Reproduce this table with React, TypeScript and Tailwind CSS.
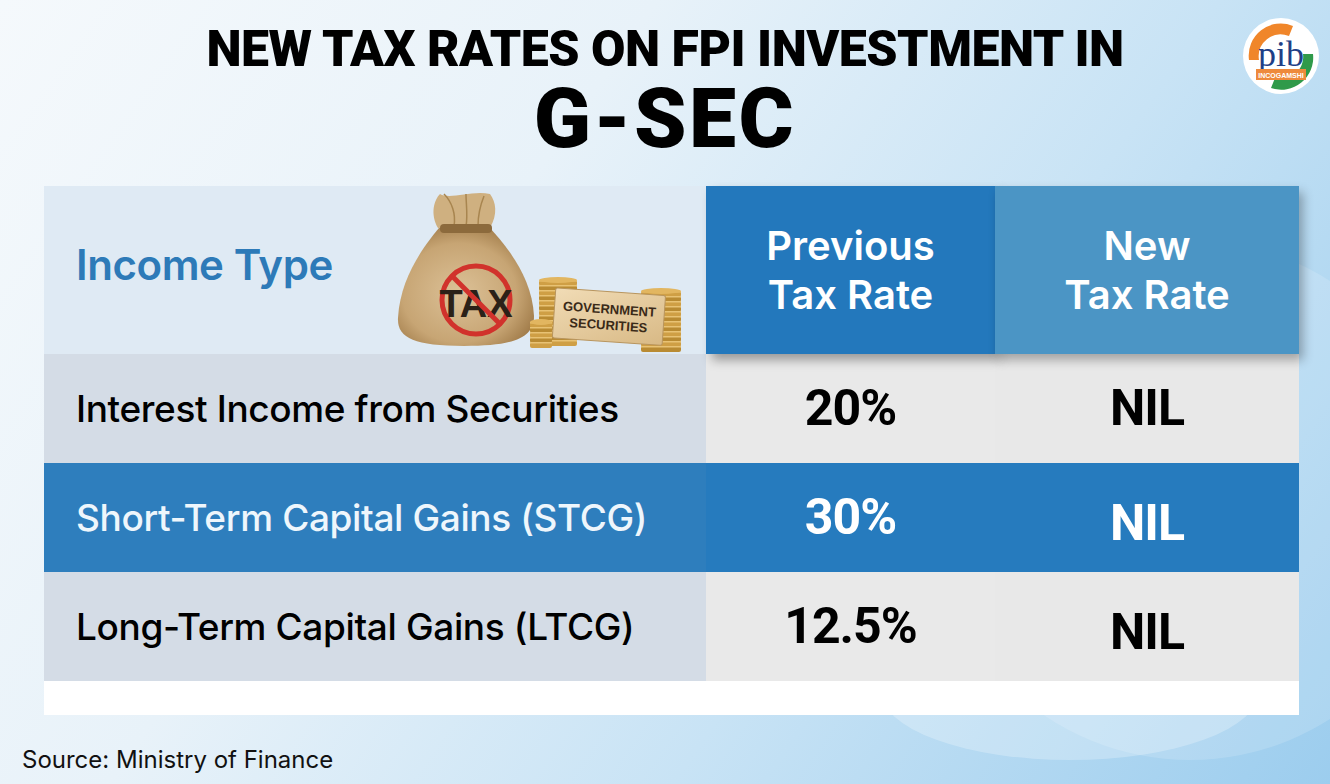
import * as React from "react";

const rows = [
  { label: "Interest Income from Securities", prev: "20%", next: "NIL", blue: false, drop: false },
  { label: "Short-Term Capital Gains (STCG)", prev: "30%", next: "NIL", blue: true, drop: true },
  { label: "Long-Term Capital Gains (LTCG)", prev: "12.5%", next: "NIL", blue: false, drop: true },
];

function PibLogo() {
  return (
    <svg width="80" height="80" viewBox="0 0 80 80">
      <circle cx="40" cy="40" r="38" fill="#ffffff" />
      <path d="M8 44 A32 32 0 0 1 52 10 L48 20 A22 22 0 0 0 18 44 Z" fill="#f0862a" />
      <path d="M72 38 A32 32 0 0 1 30 72 L34 62 A22 22 0 0 0 62 38 Z" fill="#2f9a4a" />
      <text x="40" y="50" textAnchor="middle" fontFamily="'Liberation Serif', serif" fontSize="36" fill="#1f3f86">
        pib
      </text>
      <rect x="15" y="53" width="50" height="11" fill="#ee8a3c" />
      <text x="40" y="61.5" textAnchor="middle" fontFamily="'Liberation Sans', sans-serif" fontSize="7" fontWeight="700" fill="#ffffff">
        INCOGAMSHI
      </text>
    </svg>
  );
}

function CoinStack({ x, y, w, n }: { x: number; y: number; w: number; n: number }) {
  return (
    <g>
      {Array.from({ length: n }).map((_, i) => (
        <g key={i}>
          <rect x={x} y={y + i * 5} width={w} height="6" rx="2" fill={i % 2 ? "#b98b33" : "#cf9f45"} />
          <rect x={x} y={y + i * 5} width={w} height="1.5" fill="#e8c274" />
        </g>
      ))}
      <ellipse cx={x + w / 2} cy={y} rx={w / 2} ry="3" fill="#e2b660" />
    </g>
  );
}

function TaxIllustration() {
  return (
    <svg width="292" height="164" viewBox="0 0 292 164">
      <defs>
        <radialGradient id="bag" cx="45%" cy="55%" r="60%">
          <stop offset="0%" stopColor="#dcc197" />
          <stop offset="70%" stopColor="#c7a574" />
          <stop offset="100%" stopColor="#a37e4c" />
        </radialGradient>
        <linearGradient id="sign" x1="0" y1="0" x2="1" y2="1">
          <stop offset="0%" stopColor="#f1dcb6" />
          <stop offset="100%" stopColor="#d8b985" />
        </linearGradient>
      </defs>
      {/* bag */}
      <path
        d="M45 40 C30 58 6 90 4 130 C3 150 20 158 70 158 C120 158 140 150 140 128 C138 88 112 58 96 40 Z"
        fill="url(#bag)"
      />
      <path d="M44 40 C36 26 40 12 46 6 C56 12 78 2 96 6 C102 14 104 26 96 40 Z" fill="#cfb080" />
      <path d="M50 6 C58 14 62 26 60 38 M72 6 C72 16 74 28 72 38 M90 8 C86 18 84 28 84 38" stroke="#a8854f" strokeWidth="1.5" fill="none" />
      <rect x="46" y="36" width="52" height="9" rx="4" fill="#8c6a3c" />
      <circle cx="82" cy="112" r="34" fill="none" stroke="#d1322c" strokeWidth="5" />
      <text x="82" y="129" textAnchor="middle" fontFamily="'Liberation Sans', sans-serif" fontWeight="700" fontSize="38" fill="#2b2118">
        TAX
      </text>
      <line x1="58" y1="88" x2="106" y2="136" stroke="#d1322c" strokeWidth="5" />
      {/* coins */}
      <CoinStack x={145} y={92} w={38} n={13} />
      <CoinStack x={136} y={134} w={22} n={5} />
      <CoinStack x={247} y={103} w={40} n={12} />
      {/* sign */}
      <g transform="rotate(4 220 128)">
        <rect x="160" y="104" width="110" height="50" rx="2" fill="url(#sign)" stroke="#b8955e" strokeWidth="1" />
        <text x="215" y="126" textAnchor="middle" fontFamily="'Liberation Sans', sans-serif" fontWeight="700" fontSize="13" fill="#3a2a18">
          GOVERNMENT
        </text>
        <text x="215" y="142" textAnchor="middle" fontFamily="'Liberation Sans', sans-serif" fontWeight="700" fontSize="13" fill="#3a2a18">
          SECURITIES
        </text>
      </g>
    </svg>
  );
}

export default function App() {
  return (
    <div className="relative h-[784px] w-[1330px] overflow-hidden bg-[linear-gradient(125deg,#f5f9fc_0%,#e8f2f9_35%,#c8e3f5_65%,#9ccdee_100%)]">
      {/* soft background shapes */}
      <div className="absolute -right-[120px] top-[240px] h-[520px] w-[520px] rounded-full bg-white/15" />
      <div className="absolute left-[880px] top-[620px] h-[140px] w-[380px] rounded-[50%] bg-white/25" />

      <div className="absolute right-[9px] top-[16px]">
        <PibLogo />
      </div>

      <div className="relative flex flex-col items-center pt-[26px] font-['Roboto',sans-serif] font-black text-black">
        <h1 className="text-[50px] leading-[46px] tracking-[-0.01em]">NEW TAX RATES ON FPI INVESTMENT IN</h1>
        <h2 className="text-[84px] leading-[94px] tracking-[0.03em]">G-SEC</h2>
      </div>

      <div className="relative ml-[44px] mt-[20px] w-[1255px] bg-white pb-[34px] font-['Inter',sans-serif]">
        <div className="grid h-[168px] grid-cols-[662px_289px_304px]">
          <div className="flex items-center justify-between bg-[#dfeaf4] pl-[32px] pr-[20px]">
            <span className="pb-[12px] text-[42px] font-semibold tracking-[-0.01em] text-[#2d7ab8]">Income Type</span>
            <div className="self-end pb-[2px]">
              <TaxIllustration />
            </div>
          </div>
          <div className="relative z-10 flex flex-col items-center justify-center bg-[#2378bc] text-[40px] font-semibold leading-[49px] text-white shadow-[6px_6px_10px_rgba(0,0,0,0.35)]">
            <span>Previous</span>
            <span>Tax Rate</span>
          </div>
          <div className="relative z-10 flex flex-col items-center justify-center bg-[#4b95c5] text-[40px] font-semibold leading-[49px] text-white shadow-[4px_6px_10px_rgba(0,0,0,0.3)]">
            <span>New</span>
            <span>Tax Rate</span>
          </div>
        </div>

        {rows.map((r) => (
          <div
            key={r.label}
            className={`grid h-[109px] grid-cols-[662px_289px_304px] ${r.blue ? "bg-[#267bbe] text-white" : "text-black"}`}
          >
            <div className={`flex items-center pl-[32px] ${r.blue ? "bg-[#2e7ebd] text-[#eef6fc]" : "bg-[#d4dce6]"}`}>
              <span className="text-[37px] font-medium tracking-[-0.01em]">{r.label}</span>
            </div>
            <div className={`flex items-center justify-center font-['Roboto',sans-serif] text-[50px] font-bold tracking-[-0.02em] ${r.blue ? "" : "bg-[#e9e9e9]"}`}>
              {r.prev}
            </div>
            <div
              className={`flex items-center justify-center font-['Roboto',sans-serif] text-[50px] font-bold tracking-[-0.02em] ${r.drop ? "pt-[12px]" : ""} ${r.blue ? "" : "bg-[#e8e8e8]"}`}
            >
              {r.next}
            </div>
          </div>
        ))}
      </div>

      <p className="relative ml-[22px] mt-[27px] font-['Inter',sans-serif] text-[24px] text-[#111]">Source: Ministry of Finance</p>
    </div>
  );
}
